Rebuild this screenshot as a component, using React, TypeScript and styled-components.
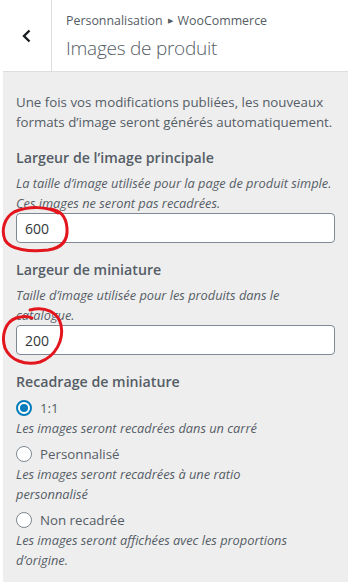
import styled, { createGlobalStyle } from "styled-components";

const GlobalStyle = createGlobalStyle`
  body {
    margin: 0;
    background: #fff;
    font-family: "Open Sans", "Noto Sans", sans-serif;
  }
`;

const Wrapper = styled.div`
  position: relative;
  width: 348px;
  height: 585px;
  padding-left: 3px;
  box-sizing: border-box;
  background: #fff;
  color: #555d66;
`;

const Header = styled.div`
  display: flex;
  height: 72px;
  background: #fff;
  border-bottom: 1px solid #ddd;
  box-sizing: border-box;
`;

const BackButton = styled.div`
  width: 48px;
  display: flex;
  align-items: center;
  justify-content: center;
  border-right: 1px solid #ddd;
`;

const HeaderText = styled.div`
  padding: 12px 0 0 14px;
`;

const Crumb = styled.div`
  font-size: 12.4px;
  line-height: 18px;
  color: #555d66;
  span {
    font-size: 7px;
    margin: 0 5px;
    vertical-align: 2px;
  }
`;

const Title = styled.div`
  margin-top: 5px;
  font-size: 19px;
  letter-spacing: -0.25px;
  font-weight: 300;
  line-height: 26px;
  color: #555d66;
`;

const Content = styled.div`
  background: #eee;
  height: 510px;
  padding: 20px 13px 0;
  box-sizing: border-box;
`;

const Intro = styled.p`
  margin: 0 0 16px;
  font-size: 13.3px;
  line-height: 20px;
`;

const Field = styled.div`
  margin-bottom: 17px;
`;

const Label = styled.div`
  font-size: 14.2px;
  font-weight: 600;
  line-height: 20px;
  margin-bottom: 5px;
`;

const Hint = styled.div`
  font-size: 12.8px;
  font-style: italic;
  line-height: 20px;
  white-space: pre-line;
`;

const Input = styled.div`
  height: 30px;
  background: #fff;
  border: 1px solid #7e8993;
  border-radius: 4px;
  box-sizing: border-box;
  padding: 0 8px;
  display: flex;
  align-items: center;
  font-size: 14px;
  color: #32373c;
`;

const RadioGroup = styled.div`
  margin-top: 4px;
`;

const RadioRow = styled.div`
  display: flex;
  align-items: center;
  gap: 8px;
  height: 20px;
  margin-top: 6px;
  font-size: 13.3px;
`;

const Radio = styled.span<{ checked?: boolean }>`
  width: 16px;
  height: 16px;
  border-radius: 50%;
  box-sizing: border-box;
  background: #fff;
  border: ${({ checked }) => (checked ? "2px solid #007cba" : "1px solid #7e8993")};
  display: flex;
  align-items: center;
  justify-content: center;
  &::after {
    content: "";
    display: ${({ checked }) => (checked ? "block" : "none")};
    width: 8px;
    height: 8px;
    border-radius: 50%;
    background: #007cba;
  }
`;

const Ink = styled.svg`
  position: absolute;
  top: 0;
  left: 0;
  pointer-events: none;
`;

const options = [
  { label: "1:1", hint: "Les images seront recadrées dans un carré", checked: true },
  { label: "Personnalisé", hint: "Les images seront recadrées à une ratio\npersonnalisé" },
  { label: "Non recadrée", hint: "Les images seront affichées avec les proportions\nd’origine." },
];

export default function App() {
  return (
    <Wrapper>
      <GlobalStyle />
      <Header>
        <BackButton>
          <svg width="12" height="14" viewBox="0 0 12 14">
            <path d="M8.5 1.5 L3 7 L8.5 12.5" fill="none" stroke="#191e23" strokeWidth="2.4" />
          </svg>
        </BackButton>
        <HeaderText>
          <Crumb>
            Personnalisation<span>▶</span>WooCommerce
          </Crumb>
          <Title>Images de produit</Title>
        </HeaderText>
      </Header>
      <Content>
        <Intro>
          Une fois vos modifications publiées, les nouveaux formats d’image seront générés
          automatiquement.
        </Intro>
        <Field>
          <Label>Largeur de l’image principale</Label>
          <Hint>
            {"La taille d’image utilisée pour la page de produit simple.\nCes images ne seront pas recadrées."}
          </Hint>
          <Input>600</Input>
        </Field>
        <Field>
          <Label>Largeur de miniature</Label>
          <Hint>{"Taille d’image utilisée pour les produits dans le\ncatalogue."}</Hint>
          <Input>200</Input>
        </Field>
        <Field>
          <Label>Recadrage de miniature</Label>
          <RadioGroup>
            {options.map((o) => (
              <div key={o.label}>
                <RadioRow>
                  <Radio checked={o.checked} />
                  {o.label}
                </RadioRow>
                <Hint>{o.hint}</Hint>
              </div>
            ))}
          </RadioGroup>
        </Field>
      </Content>
      <Ink width="348" height="585">
        <path
          d="M58 213 C48 206 28 206 14 212 C4 218 1 230 5 240 C10 250 30 252 48 250 C62 248 68 240 67 228 C66 216 60 210 50 209"
          fill="none"
          stroke="#e3161e"
          strokeWidth="3"
          strokeLinecap="round"
        />
        <path
          d="M30 310 C45 306 58 312 61 325 C64 340 56 356 40 362 C25 366 10 360 5 348 C1 336 5 322 16 318 C22 316 28 316 32 318"
          fill="none"
          stroke="#e3161e"
          strokeWidth="3"
          strokeLinecap="round"
        />
      </Ink>
    </Wrapper>
  );
}
